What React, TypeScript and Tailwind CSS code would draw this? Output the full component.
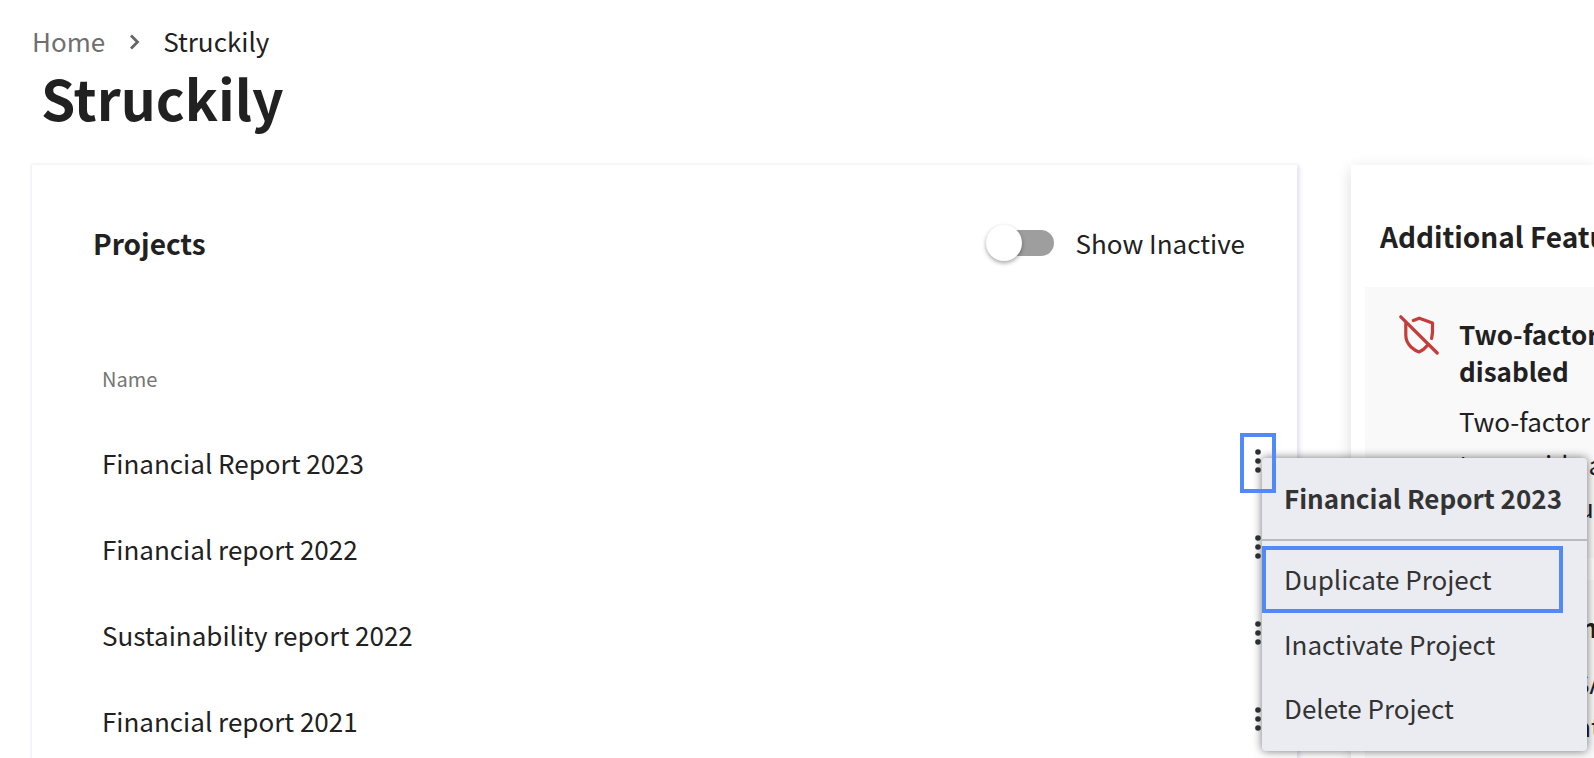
import { useState } from 'react';

interface Project {
  id: number;
  name: string;
}

interface Feature {
  title: string[];
  body: string[];
}

const projects: Project[] = [
  { id: 1, name: 'Financial Report 2023' },
  { id: 2, name: 'Financial report 2022' },
  { id: 3, name: 'Sustainability report 2022' },
  { id: 4, name: 'Financial report 2021' },
];

const features: Feature[] = [
  {
    title: ['Two-factor authentication', 'disabled'],
    body: ['Two-factor authentication', 'to provide a much', 'better security'],
  },
  {
    title: ['Single sign-on'],
    body: ['Integrate SAML', 'the authentication'],
  },
];

const MoreIcon = () => (
  <svg width="8" height="26" viewBox="0 0 8 26" fill="#2b2f33" aria-hidden="true">
    <circle cx="4" cy="4" r="2.8" />
    <circle cx="4" cy="13" r="2.8" />
    <circle cx="4" cy="22" r="2.8" />
  </svg>
);

const ShieldOffIcon = () => (
  <svg className="shrink-0" width="40" height="40" viewBox="0 0 40 40" fill="none" stroke="#c43d3a" strokeWidth="3.2" strokeLinecap="round" strokeLinejoin="round" aria-hidden="true">
    <path d="M1.8 1.8 38.2 38" />
    <path d="M14.3 5.5 20.3 3.2 33.5 8V17.5L32.6 23.5" />
    <path d="M6.8 8.5V20C6.8 25 8.5 28.5 12 32C14.5 34.2 17 36 20 37C23 35.8 26 33.5 28.3 30.5" />
  </svg>
);

function ProjectMenu({ project }: { project: Project }) {
  return (
    <div role="menu" className="absolute left-[22px] top-[25px] w-[325px] h-[293px] rounded bg-[#ebecf2] text-[#333] shadow-[0_0_10px_rgba(0,0,0,0.55)]">
      <div className="flex h-[83px] items-center border-b-2 border-[#b9babf] pb-0.5 pl-[22px] font-bold whitespace-nowrap">
        {project.name}
      </div>
      <div className="flex flex-col pt-[5px]">
        <button role="menuitem" className="mr-6 h-[67px] border-4 border-[#4f8af7] pb-0.5 pl-[18px] text-left">Duplicate Project</button>
        <button role="menuitem" className="h-16 pb-0.5 pl-[22px] text-left">Inactivate Project</button>
        <button role="menuitem" className="h-16 pb-0.5 pl-[22px] text-left">Delete Project</button>
      </div>
    </div>
  );
}

export default function App() {
  const [showInactive, setShowInactive] = useState(false);
  const [openId, setOpenId] = useState<number | null>(1);

  return (
    <div className="h-screen overflow-hidden bg-white pl-8 pt-[22px] font-['Noto_Sans_CJK_SC',sans-serif] text-[26px] leading-[38px] text-[#212121]">
      <nav aria-label="Breadcrumb" className="flex items-center">
        <a href="#home" className="text-[#6f6f6f]">Home</a>
        <svg className="mx-[22px]" width="14" height="18" viewBox="0 0 14 18" fill="none" stroke="#666" strokeWidth="2.8" aria-hidden="true">
          <path d="M4 3.5 10.500 10 4 16.500" />
        </svg>
        <span aria-current="page">Struckily</span>
      </nav>
      <h1 className="pl-[9px] text-[55px] font-bold leading-[74px]">Struckily</h1>

      <div className="mt-[31px] flex items-start gap-[54px]">
        <section className="h-[700px] min-w-0 flex-1 shadow-[2px_2px_4px_1px_#e6e6f2,0_0_3px_1px_#f0f0f7]">
          <div className="flex items-start justify-between pl-[61px] pr-[52px] pt-[59px]">
            <h2 className="text-[28px] font-bold leading-[38px]">Projects</h2>
            <label className="flex items-center gap-[22px]">
              <input type="checkbox" role="switch" className="peer sr-only" checked={showInactive} onChange={(e) => setShowInactive(e.target.checked)} />
              <span className="flex h-[26px] w-[68px] items-center rounded-full bg-[linear-gradient(to_right,transparent_16px,#9e9e9e_16px)] peer-checked:justify-end">
                <span className="size-9 rounded-full bg-white shadow-[0_2px_4px_rgba(0,0,0,0.35)]" />
              </span>
              Show Inactive
            </label>
          </div>

          <table className="mt-[76px] w-full border-collapse">
            <thead>
              <tr className="h-[82px] text-left text-[20px] text-[#757575]">
                <th className="p-0 pl-[70px] font-normal">Name</th>
                <th className="p-0"><span className="sr-only">Actions</span></th>
              </tr>
            </thead>
            <tbody>
              {projects.map((project) => (
                <tr key={project.id} className="h-[86px]">
                  <td className="p-0 pl-[70px]">{project.name}</td>
                  <td className="w-[57px] p-0">
                    <div className="relative h-[60px] w-9">
                      {openId === project.id && <ProjectMenu project={project} />}
                      <button
                        aria-label={`Actions for ${project.name}`}
                        onClick={() => setOpenId(openId === project.id ? null : project.id)}
                        className={`flex h-[60px] w-9 items-center justify-center border-4 pb-1 ${openId === project.id ? 'relative border-[#4f8af7]' : 'border-transparent'}`}
                      >
                        <MoreIcon />
                      </button>
                    </div>
                  </td>
                </tr>
              ))}
            </tbody>
          </table>
        </section>

        <aside className="h-[700px] w-[243px] shrink-0 pl-3.5 pt-[51px] whitespace-nowrap shadow-[0_4px_14px_rgba(0,0,0,0.14)]">
          <h2 className="pl-[15px] text-[28px] font-bold leading-10">Additional Features</h2>
          <div className="mt-[31px] flex flex-col gap-[22px]">
            {features.map((feature) => (
              <article key={feature.title[0]} className="group flex gap-5 bg-[#f9f9f9] pb-[30px] pl-[34px] pt-7">
                <ShieldOffIcon />
                <div>
                  <h3 className="font-bold leading-[37px]">
                    {feature.title.map((line) => <span key={line} className="block">{line}</span>)}
                  </h3>
                  <p className="mt-2.5 leading-[43px] group-last:mt-4">
                    {feature.body.map((line) => <span key={line} className="block">{line}</span>)}
                  </p>
                </div>
              </article>
            ))}
          </div>
        </aside>
      </div>
    </div>
  );
}
